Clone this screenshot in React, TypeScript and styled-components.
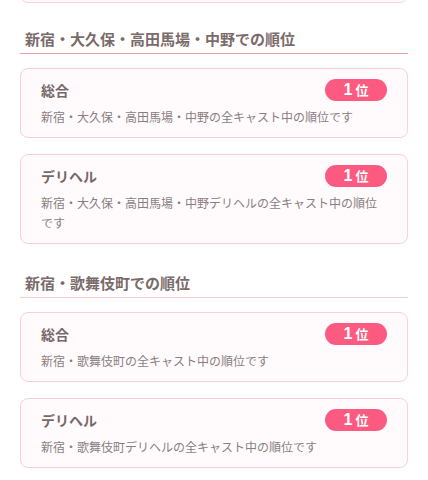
import styled, { createGlobalStyle } from "styled-components";

const GlobalStyle = createGlobalStyle`
    html, body {
        margin: 0;
        padding: 0;
        background: #ffffff;
    }
    body {
        font-family: "Noto Sans CJK JP", "Noto Sans", sans-serif;
    }
    #root {
        width: 428px;
        height: 480px;
        overflow: hidden;
    }
`;

// Page column
const Page = styled.div`
    display: flex;
    flex-direction: column;
    padding: 0 20px;
`;

// Bottom edge of the card above the viewport
const CutCard = styled.div`
    height: 60px;
    margin-top: -59px;
    border: 1px solid #fbd0d6;
    border-radius: 8px;
    background: #fffbfd;
`;

const Section = styled.section<{ $first?: boolean }>`
    display: flex;
    flex-direction: column;
    margin-top: ${(p) => (p.$first ? "25px" : "28px")};
`;

const SectionTitle = styled.h2<{ $line: string }>`
    margin: 0 0 14px;
    padding: 0 5px 3px;
    font-size: 15px;
    line-height: 22px;
    font-weight: 700;
    color: #7a6b6b;
    border-bottom: 1px solid ${(p) => p.$line};
`;

const CardList = styled.div`
    display: flex;
    flex-direction: column;
    gap: 16px;
`;

const Card = styled.div`
    display: flex;
    flex-direction: column;
    gap: 6px;
    padding: 10px 20px;
    border: 1px solid #fbd0d6;
    border-radius: 8px;
    background: #fffbfd;
`;

const CardHead = styled.div`
    display: flex;
    align-items: center;
    justify-content: space-between;
    height: 22px;
`;

const CardTitle = styled.div`
    font-size: 14px;
    font-weight: 700;
    color: #766868;
`;

const Badge = styled.div`
    display: flex;
    align-items: baseline;
    justify-content: center;
    gap: 3px;
    width: 62px;
    height: 22px;
    line-height: 22px;
    border-radius: 11px;
    background: #fc5a80;
    color: #ffffff;
    font-weight: 700;
`;

const BadgeNum = styled.span`
    font-family: "Liberation Sans", "Noto Sans", sans-serif;
    font-size: 16px;
`;

const BadgeUnit = styled.span`
    font-size: 13px;
`;

const CardText = styled.p`
    margin: 0;
    font-size: 12px;
    line-height: 20px;
    color: #8a7e7e;
`;

type Rank = { title: string; text: string; rank: number };

const sections: { name: string; line: string; ranks: Rank[] }[] = [
    {
        name: "新宿・大久保・高田馬場・中野での順位",
        line: "#eda0a0",
        ranks: [
            { title: "総合", text: "新宿・大久保・高田馬場・中野の全キャスト中の順位です", rank: 1 },
            { title: "デリヘル", text: "新宿・大久保・高田馬場・中野デリヘルの全キャスト中の順位です", rank: 1 },
        ],
    },
    {
        name: "新宿・歌舞伎町での順位",
        line: "#f8cccc",
        ranks: [
            { title: "総合", text: "新宿・歌舞伎町の全キャスト中の順位です", rank: 1 },
            { title: "デリヘル", text: "新宿・歌舞伎町デリヘルの全キャスト中の順位です", rank: 1 },
        ],
    },
];

const App = () => {
    return (
        <>
            <GlobalStyle />
            <Page>
                <CutCard />
                {sections.map((s, i) => (
                    <Section key={s.name} $first={i === 0}>
                        <SectionTitle $line={s.line}>{s.name}</SectionTitle>
                        <CardList>
                            {s.ranks.map((r) => (
                                <Card key={r.title}>
                                    <CardHead>
                                        <CardTitle>{r.title}</CardTitle>
                                        <Badge>
                                            <BadgeNum>{r.rank}</BadgeNum>
                                            <BadgeUnit>位</BadgeUnit>
                                        </Badge>
                                    </CardHead>
                                    <CardText>{r.text}</CardText>
                                </Card>
                            ))}
                        </CardList>
                    </Section>
                ))}
            </Page>
        </>
    );
};

export default App;
